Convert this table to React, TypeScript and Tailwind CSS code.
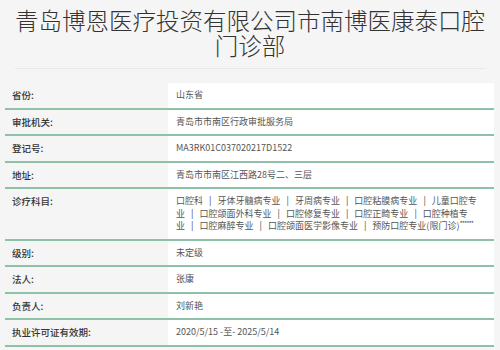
import React from "react";

const font = { fontFamily: '"Noto Sans CJK SC", "Noto Sans", sans-serif' };

function Sep() {
  return <span className="mx-[6px] text-[#444]">|</span>;
}

type Row = { label: string; value: React.ReactNode };

const diag1 = ["口腔科", "牙体牙髓病专业", "牙周病专业", "口腔粘膜病专业", "儿童口腔专"];
const diag2 = ["业", "口腔颌面外科专业", "口腔修复专业", "口腔正畸专业", "口腔种植专"];
const diag3 = ["业", "口腔麻醉专业", "口腔颌面医学影像专业", "预防口腔专业(限门诊)"];

function Line({ items, tail }: { items: string[]; tail?: React.ReactNode }) {
  return (
    <div className="whitespace-nowrap">
      {items.map((t, i) => (
        <React.Fragment key={i}>
          {i > 0 && <Sep />}
          {t}
        </React.Fragment>
      ))}
      {tail}
    </div>
  );
}

const rows: Row[] = [
  { label: "省份:", value: "山东省" },
  { label: "审批机关:", value: "青岛市市南区行政审批服务局" },
  { label: "登记号:", value: "MA3RK01C037020217D1522" },
  { label: "地址:", value: "青岛市市南区江西路28号二、三层" },
  {
    label: "诊疗科目:",
    value: (
      <>
        <Line items={diag1} />
        <Line items={diag2} />
        <Line
          items={diag3}
          tail={<span className="align-top text-[7px] leading-none tracking-[-1px]">******</span>}
        />
      </>
    ),
  },
  { label: "级别:", value: "未定级" },
  { label: "法人:", value: "张康" },
  { label: "负责人:", value: "刘新艳" },
  { label: "执业许可证有效期:", value: "2020/5/15 -至- 2025/5/14" },
];

export default function App() {
  return (
    <div className="w-[500px] h-[350px] overflow-hidden bg-[#f5f5f5]" style={font}>
      <h1 className="px-[10px] pt-[8px] text-center text-[23.5px] leading-[25px] font-light text-[#333]">
        青岛博恩医疗投资有限公司市南博医康泰口腔门诊部
      </h1>
      <div className="mx-[15px] mt-[10px] h-px bg-[#e8e8e8]" />
      <div className="mx-[5px] mt-[14px] w-[489px]">
        {rows.map((r) => (
          <div key={r.label} className="flex border-b-2 border-[#8fc1a9]">
            <div className="w-[163px] shrink-0 pl-[7px] py-[6px] text-[9.5px] leading-[12.5px] font-medium text-[#333]">
              {r.label}
            </div>
            <div className="flex-1 bg-white pl-[8px] pr-[6px] py-[6px] text-[9px] leading-[12.5px] text-[#555]">
              {r.value}
            </div>
          </div>
        ))}
      </div>
    </div>
  );
}
